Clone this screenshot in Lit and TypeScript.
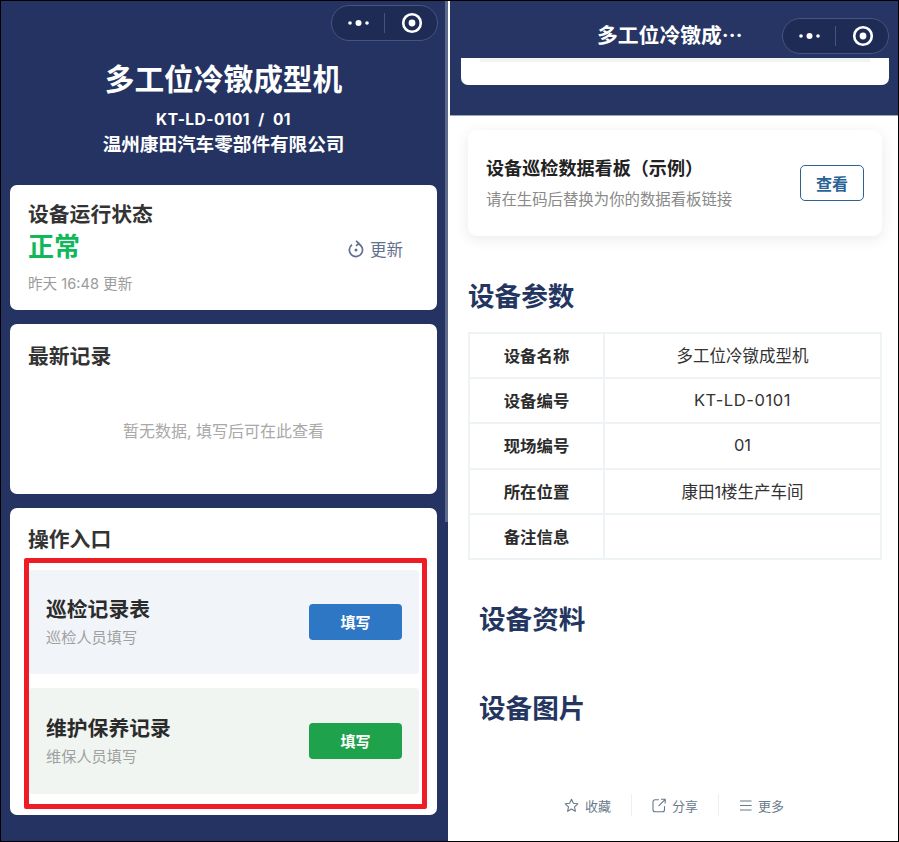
import { LitElement, html, css, svg } from "lit";
import { customElement } from "lit/decorators.js";

const capsule = html`<div class="capsule">
  <svg width="21" height="8" viewBox="0 0 21 8"><circle cx="2" cy="4" r="1.8" fill="#fff"/><circle cx="10.5" cy="4" r="3" fill="#fff"/><circle cx="19" cy="4" r="1.8" fill="#fff"/></svg>
  <span class="cap-div"></span>
  <svg width="22" height="22" viewBox="0 0 22 22"><circle cx="11" cy="11" r="8.8" fill="none" stroke="#fff" stroke-width="2.6"/><circle cx="11" cy="11" r="3.4" fill="#fff"/></svg>
</div>`;

const refresh = svg`<svg width="16" height="18" viewBox="0 0 16 18" fill="none" stroke="#5f708f" stroke-width="1.7"><path d="M9.8 3.6A6.6 6.6 0 1 1 4 4.6"/><path d="M8 .8 11 3.4 8 5.9" stroke-linejoin="round"/><circle cx="8" cy="10" r="1.5" fill="#5f708f" stroke="none"/></svg>`;
const star = svg`<svg width="15" height="15" viewBox="0 0 15 15" fill="none" stroke="#66788a" stroke-width="1.1" stroke-linejoin="round"><path d="M7.5 1.2 9.4 5.3 13.8 5.8 10.5 8.8 11.4 13.3 7.5 11 3.6 13.3 4.5 8.8 1.2 5.8 5.6 5.3Z"/></svg>`;
const share = svg`<svg width="14" height="15" viewBox="0 0 14 15" fill="none" stroke="#66788a" stroke-width="1.1" stroke-linecap="round"><path d="M6.5 1.8H3A2 2 0 0 0 1 3.8V11.8A2 2 0 0 0 3 13.8H10.5A2 2 0 0 0 12.5 11.8V8.5"/><path d="M7 7.6 13 1.6M9.4 1.2H13.2V5"/></svg>`;
const menu = svg`<svg width="13" height="13" viewBox="0 0 13 13" stroke="#66788a" stroke-width="1.2"><path d="M1 2H12.5M1 6.5H12.5M1 11H12.5"/></svg>`;

const rows: [string, string][] = [
  ["设备名称", "多工位冷镦成型机"],
  ["设备编号", "KT-LD-0101"],
  ["现场编号", "01"],
  ["所在位置", "康田1楼生产车间"],
  ["备注信息", ""],
];

@customElement("app-root")
export class AppRoot extends LitElement {
  static styles = css`
    :host { display: block; width: 899px; height: 842px; background: #000; overflow: hidden;
      font-family: Inter, "Noto Sans CJK SC", "Noto Sans", sans-serif; }
    * { box-sizing: border-box; }
    .shot { display: flex; width: 899px; height: 841px; padding: 1px 1px 0 1px; background: #000; }
    .left { position: relative; width: 447px; height: 840px; background: #243361; flex: none; }
    .gap { width: 2px; background: #fff; flex: none; }
    .right { width: 448px; height: 840px; background: #fff; flex: none; display: flex; flex-direction: column; }
    .scroll { position: absolute; left: 444px; top: 0; width: 3px; height: 521px; background: #5d6a8c; }
    .capsule { display: flex; align-items: center; width: 107px; height: 36px; border-radius: 18px;
      background: #1e2b55; border: 1px solid #46557f; padding-left: 16px; flex: none; }
    .left > .capsule { position: absolute; left: 330px; top: 4px; }
    .cap-div { width: 1px; height: 20px; background: #45527b; margin: 0 16px 0 15px; }
    .head { height: 184px; padding: 58px 2px 0 0; text-align: center; color: #fff; }
    .head h1 { margin: 0; font-size: 29.7px; line-height: 40px; font-weight: 700; }
    .code { margin-top: 10px; font-size: 15.5px; line-height: 22px; font-weight: 700; white-space: pre; letter-spacing: 0.45px; }
    .co { margin-top: 0; font-size: 18.6px; line-height: 26px; font-weight: 700; }
    .cards { display: flex; flex-direction: column; gap: 14px; padding: 0 11px 0 9px; }
    .card { position: relative; background: #fff; border-radius: 7px; width: 427px; }
    .title { font-size: 20.8px; line-height: 26px; font-weight: 700; color: #333; }
    .status { height: 125px; padding: 17px 34px 0 18px; display: flex; justify-content: space-between; }
    .ok { margin-top: 1px; font-size: 26px; line-height: 36px; font-weight: 700; color: #10b85a; }
    .time { margin-top: 7px; font-size: 14.6px; line-height: 24px; color: #9b9b9b; }
    .upd { display: flex; align-items: center; gap: 6px; height: 24px; margin-top: 35px; font-size: 16.5px; color: #5f708f; }
    .latest { height: 170px; padding: 20px 0 5px; display: flex; flex-direction: column; }
    .latest .title, .ops .title { padding-left: 18px; }
    .empty { flex: 1; display: flex; align-items: center; justify-content: center; font-size: 16px; color: #a9a9a9; }
    .ops { height: 307px; padding-top: 19px; }
    .item { display: flex; align-items: center; justify-content: space-between; margin: 0 18px 0 19px;
      padding: 0 17px; border-radius: 4px; }
    .i1 { height: 104px; margin-top: 17px; background: #f1f4f8; }
    .i2 { height: 106px; margin-top: 14px; background: #f0f5f2; }
    .i-b { margin-top: 2px; }
    .i-t { font-size: 20.8px; line-height: 26px; font-weight: 700; color: #2b2b2b; }
    .i-s { margin-top: 4px; font-size: 15.2px; line-height: 22px; color: #a0a0a0; }
    .btn { width: 93px; height: 36px; border-radius: 4px; color: #fff; font-size: 15px; font-weight: 700;
      display: flex; align-items: center; justify-content: center; padding-bottom: 2px; }
    .blue { background: #2e77c4; }
    .green { background: #1fa24c; }
    .mark { position: absolute; left: 14px; top: 50px; width: 403px; height: 251px; border: 5px solid #ee1c25; border-radius: 2px; }
    .band { height: 115px; background: #263564; border-bottom: 1px solid #9aa5b8; display: flex; flex-direction: column; }
    .nav { height: 57px; flex: none; display: flex; align-items: flex-start; padding: 17px 0 0 147px; }
    .nav-t { width: 185px; margin-top: -1px; font-family: "Noto Sans CJK SC", sans-serif; font-size: 20.8px; line-height: 34px; font-weight: 700; color: #fff; white-space: nowrap; }
    .frag { width: 428px; height: 27px; margin-left: 11px; background: #fff; border-radius: 0 0 7px 7px; padding: 0 19px; }
    .frag div { height: 4px; background: #f0f5f2; }
    .dash { width: 414px; height: 106px; margin: 14px 0 0 18px; padding: 0 18px 1px; border-radius: 9px; background: #fff;
      box-shadow: 0 3px 14px rgba(40, 50, 80, 0.1); display: flex; align-items: center; justify-content: space-between; }
    .d-t { font-size: 18.1px; line-height: 26px; font-weight: 700; color: #222; white-space: nowrap; }
    .d-s { margin-top: 8px; font-size: 15.4px; line-height: 22px; color: #8a8a8a; white-space: nowrap; }
    .view { width: 64px; height: 36px; margin-top: 1px; border: 1.5px solid #2a6496; border-radius: 5px; color: #2a6496; padding-bottom: 1px;
      font-size: 16px; font-weight: 700; display: flex; align-items: center; justify-content: center; }
    h2 { margin: 0; font-size: 26.6px; line-height: 36px; font-weight: 700; color: #24365f; }
    .h-a { margin: 42px 0 0 18px; }
    .h-b { margin: 41px 0 0 29px; }
    .h-c { margin: 53px 0 0 29px; }
    .table { width: 414px; height: 228px; margin: 18px 0 0 18px; display: grid; grid-template-columns: 135px 1fr;
      grid-template-rows: repeat(5, 1fr); border: 2px solid #eef3f6; border-bottom: 0; }
    .c { display: flex; align-items: center; justify-content: center; border: 0 solid #eef3f6; border-bottom-width: 2px;
      padding-bottom: 1px; font-size: 16.5px; color: #333; }
    .c.k { font-weight: 700; font-size: 16.4px; border-right-width: 2px; color: #2b2b2b; }
    .c.id { letter-spacing: 0.6px; }
    .foot { margin-top: 57px; height: 44px; display: flex; justify-content: center; align-items: center; }
    .f { display: flex; align-items: center; gap: 6px; padding: 0 20px; height: 22px; font-size: 13px; color: #6c7c8c; }
    .f + .f { border-left: 1px solid #edf0f2; }
  `;

  render() {
    return html`<div class="shot">
      <section class="left">
        <div class="head">
          <h1>多工位冷镦成型机</h1>
          <div class="code">KT-LD-0101  /  01</div>
          <div class="co">温州康田汽车零部件有限公司</div>
        </div>
        <div class="cards">
          <div class="card status">
            <div>
              <div class="title">设备运行状态</div>
              <div class="ok">正常</div>
              <div class="time">昨天 16:48 更新</div>
            </div>
            <div class="upd">${refresh}<span>更新</span></div>
          </div>
          <div class="card latest">
            <div class="title">最新记录</div>
            <div class="empty">暂无数据, 填写后可在此查看</div>
          </div>
          <div class="card ops">
            <div class="title">操作入口</div>
            <div class="item i1">
              <div class="i-b"><div class="i-t">巡检记录表</div><div class="i-s">巡检人员填写</div></div>
              <div class="btn blue">填写</div>
            </div>
            <div class="item i2">
              <div class="i-b"><div class="i-t">维护保养记录</div><div class="i-s">维保人员填写</div></div>
              <div class="btn green">填写</div>
            </div>
            <div class="mark"></div>
          </div>
        </div>
        <div class="scroll"></div>
        ${capsule}
      </section>
      <div class="gap"></div>
      <section class="right">
        <div class="band">
          <div class="nav"><div class="nav-t">多工位冷镦成…</div>${capsule}</div>
          <div class="frag"><div></div></div>
        </div>
        <div class="dash">
          <div><div class="d-t">设备巡检数据看板（示例）</div><div class="d-s">请在生码后替换为你的数据看板链接</div></div>
          <div class="view">查看</div>
        </div>
        <h2 class="h-a">设备参数</h2>
        <div class="table">
          ${rows.map(([k, v], i) => html`<div class="c k">${k}</div><div class="c ${i === 1 ? "id" : ""}">${v}</div>`)}
        </div>
        <h2 class="h-b">设备资料</h2>
        <h2 class="h-c">设备图片</h2>
        <div class="foot">
          <div class="f">${star}<span>收藏</span></div>
          <div class="f">${share}<span>分享</span></div>
          <div class="f">${menu}<span>更多</span></div>
        </div>
      </section>
    </div>`;
  }
}
